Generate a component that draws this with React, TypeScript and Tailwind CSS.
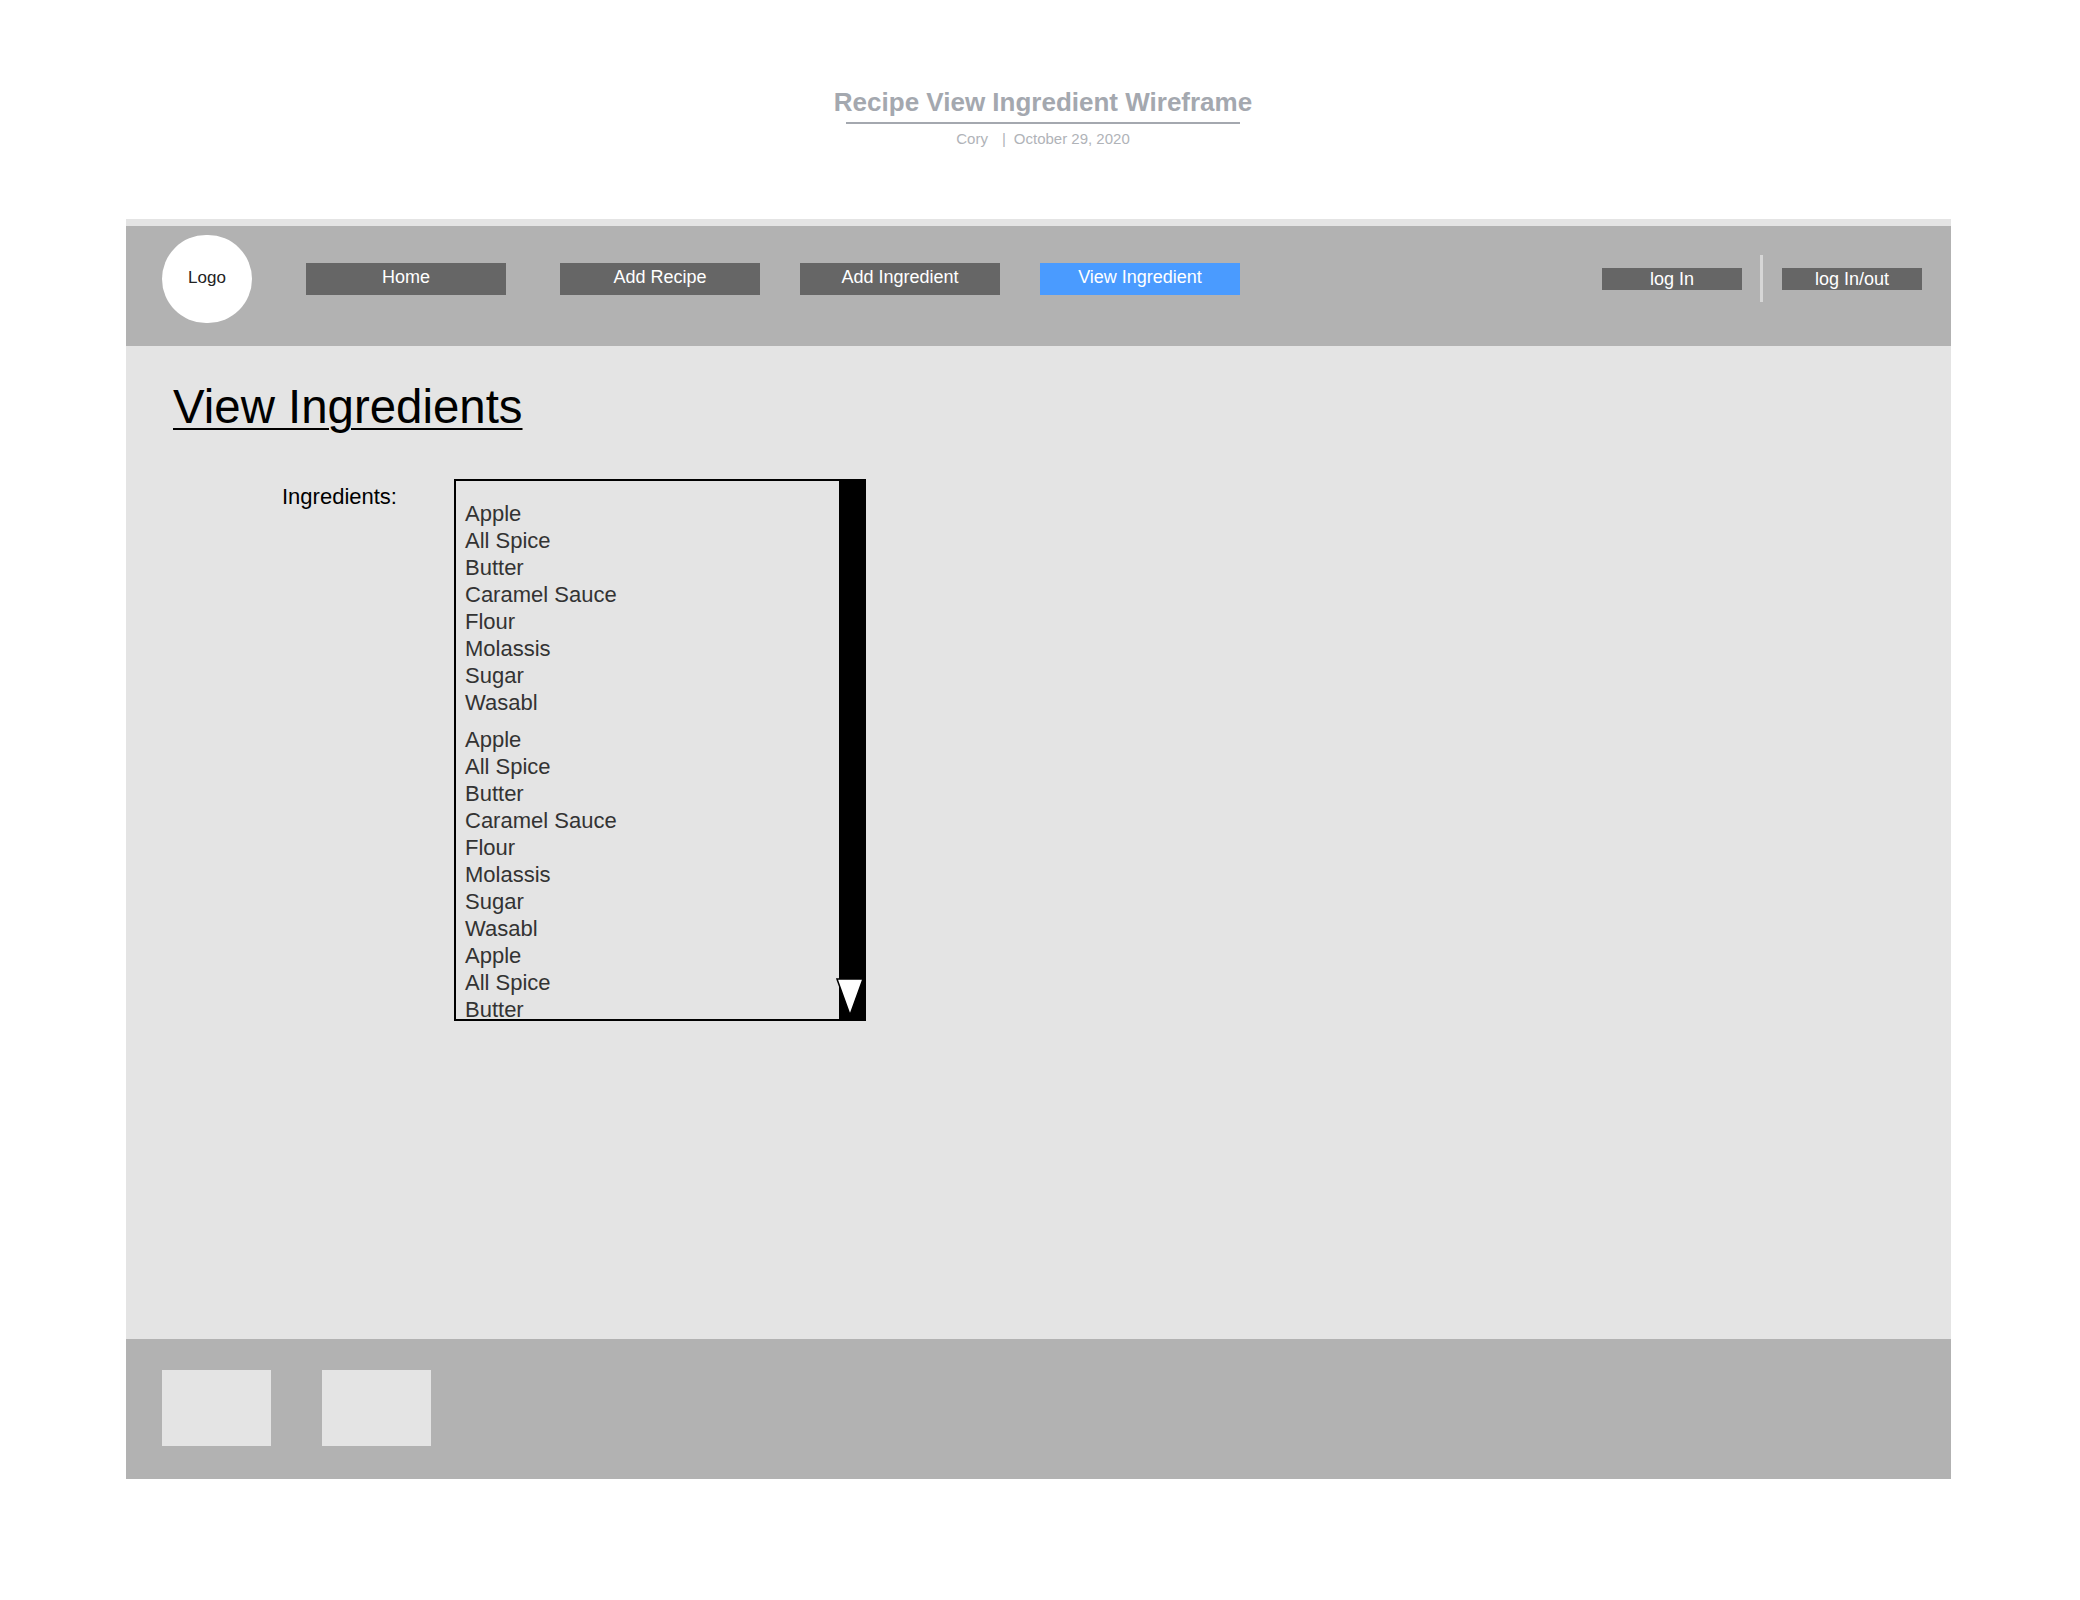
import React from 'react';

const navItems = ['Home', 'Add Recipe', 'Add Ingredient', 'View Ingredient'];

const group = ['Apple', 'All Spice', 'Butter', 'Caramel Sauce', 'Flour', 'Molassis', 'Sugar', 'Wasabl'];

function NavButton({ label, active, first }: { label: string; active?: boolean; first?: boolean }) {
  return (
    <div
      className={
        'mt-[37px] flex h-[32px] w-[200px] items-center justify-center pb-[3px] text-[18px] text-white ' +
        (active ? 'bg-[#4a9bff] ' : 'bg-[#666666] ') +
        (first ? 'ml-[54px]' : 'ml-[40px]')
      }
    >
      {label}
    </div>
  );
}

function IngredientList() {
  return (
    <div className="relative flex h-[542px] w-[412px] border-2 border-black">
      <div className="flex-1 overflow-hidden pl-[9px] pt-[19px] text-[22px] leading-[27px] text-[#333333]">
        <ul>
          {group.map((g, i) => (
            <li key={'a' + i}>{g}</li>
          ))}
        </ul>
        <ul className="mt-[10px]">
          {[...group, ...group.slice(0, 3)].map((g, i) => (
            <li key={'b' + i}>{g}</li>
          ))}
        </ul>
      </div>
      <div className="w-[25px] bg-black" />
      <svg className="absolute left-[380px] top-[497px]" width="28" height="38" viewBox="0 0 28 38">
        <polygon points="1,1 27,1 14,37" fill="white" stroke="black" strokeWidth="1.5" />
      </svg>
    </div>
  );
}

export default function App() {
  return (
    <div className="min-h-[1600px] bg-white font-['Liberation_Sans',Arial,sans-serif]">
      <header className="flex flex-col items-center pl-[6px] pt-[87px]">
        <h1 className="text-[26px] font-bold leading-[30px] text-[#a4a8af]">Recipe View Ingredient Wireframe</h1>
        <div className="mt-[5px] h-[2px] w-[394px] bg-[#a4a8af]" />
        <div className="mt-[6px] flex text-[15px] leading-[18px] text-[#b0b3b8]">
          <span>Cory</span>
          <span className="ml-[14px]">|</span>
          <span className="ml-[8px]">October 29, 2020</span>
        </div>
      </header>

      <div className="ml-[126px] mt-[71px] w-[1825px] bg-[#e4e4e4] pt-[7px]">
        <nav className="flex h-[120px] items-start bg-[#b2b2b2] pl-[36px] pr-[29px]">
          <div className="mt-[9px] flex h-[88px] w-[90px] items-center justify-center rounded-full bg-white pb-[2px] text-[17px] text-[#222222]">
            Logo
          </div>
          {navItems.map((n, i) => (
            <NavButton key={n} label={n} first={i < 2} active={n === 'View Ingredient'} />
          ))}
          <div className="flex-1" />
          <div className="mt-[42px] flex h-[22px] w-[140px] items-center justify-center bg-[#666666] text-[18px] text-white">
            log In
          </div>
          <div className="ml-[18px] mt-[29px] h-[47px] w-[3px] bg-[#d6d6d6]" />
          <div className="ml-[19px] mt-[42px] flex h-[22px] w-[140px] items-center justify-center bg-[#666666] text-[18px] text-white">
            log In/out
          </div>
        </nav>

        <main className="h-[993px] pl-[47px] pt-[37px]">
          <h2 className="text-[47.4px] leading-[47px] text-black underline decoration-2 underline-offset-[5px]">
            View Ingredients
          </h2>
          <div className="mt-[49px] flex pl-[109px]">
            <div className="mt-[4px] w-[172px] text-[22px] leading-[27px] text-black">Ingredients:</div>
            <IngredientList />
          </div>
        </main>

        <footer className="flex h-[140px] gap-[51px] bg-[#b2b2b2] pl-[36px] pt-[31px]">
          <div className="h-[76px] w-[109px] bg-[#e4e4e4]" />
          <div className="h-[76px] w-[109px] bg-[#e4e4e4]" />
        </footer>
      </div>
    </div>
  );
}
